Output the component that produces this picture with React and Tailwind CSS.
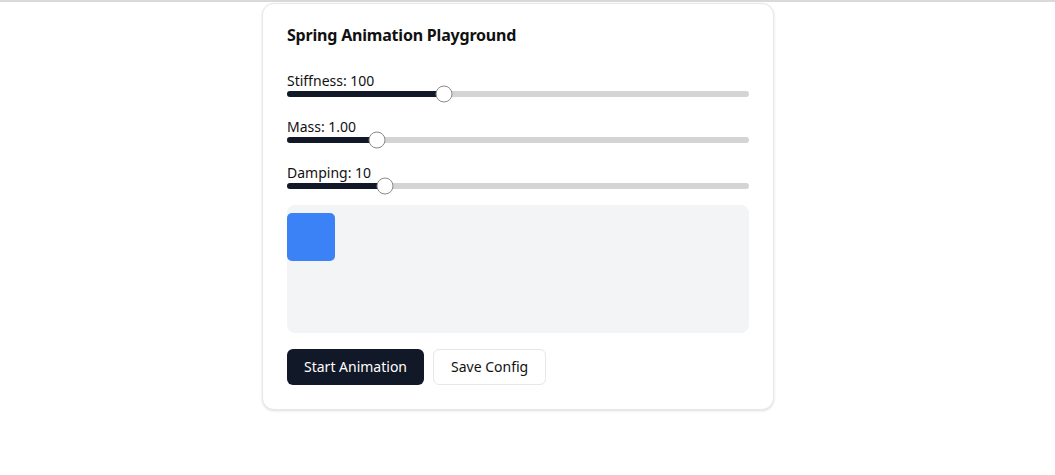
import { useState } from "react";

const sliders = [
  { key: "stiffness", label: "Stiffness", min: 0, max: 300, step: 1, fmt: (v) => v },
  { key: "mass", label: "Mass", min: 0.1, max: 5, step: 0.1, fmt: (v) => v.toFixed(2) },
  { key: "damping", label: "Damping", min: 0, max: 50, step: 1, fmt: (v) => v },
];

function Slider({ label, value, min, max }) {
  const frac = (value - min) / (max - min);
  // thumb is 17px wide, it travels inside the track like a native range
  const left = `calc(${frac} * (100% - 17px) + 8.5px)`;
  return (
    <div className="mb-5">
      <p className="text-sm leading-5 text-[#111]">{label}</p>
      <div className="relative h-[6px] rounded-full bg-[#d4d4d4]">
        <div className="absolute left-0 top-0 h-full rounded-full bg-[#111827]" style={{ width: left }} />
        <div
          className="absolute top-1/2 w-[17px] h-[17px] -translate-x-1/2 -translate-y-1/2 rounded-full bg-white border border-[#8a8a8a]"
          style={{ left }}
        />
      </div>
    </div>
  );
}

export default function App() {
  const [config] = useState({ stiffness: 100, mass: 1, damping: 10 });

  return (
    <div className="min-h-[475px] bg-white font-['Segoe_UI','Noto_Sans',sans-serif] text-[#111]">
      <div className="h-[2px] bg-[#d9d9d9]" />
      <div className="w-[1036px]">
        <div className="mx-auto mt-[1px] w-[512px] rounded-xl border border-[#e5e7eb] bg-white px-6 pt-[19px] pb-6 shadow-sm">
          <h2 className="text-base font-bold leading-6 mb-6 tracking-[-0.2px]">Spring Animation Playground</h2>

          {sliders.map((s) => (
            <Slider
              key={s.key}
              label={`${s.label}: ${s.fmt(config[s.key])}`}
              value={config[s.key]}
              min={s.min}
              max={s.max}
            />
          ))}

          <div className="-mt-[4px] h-32 rounded-lg bg-[#f3f4f6] pt-2">
            <div className="h-12 w-12 rounded-[5px] bg-[#3b82f6]" />
          </div>

          <div className="mt-4 flex gap-[9px]">
            <button className="h-9 rounded-md bg-[#111827] px-[17px] text-sm text-white">Start Animation</button>
            <button className="h-9 rounded-md border border-[#e5e7eb] bg-white px-[17px] text-sm text-[#111]">
              Save Config
            </button>
          </div>
        </div>
      </div>
    </div>
  );
}
